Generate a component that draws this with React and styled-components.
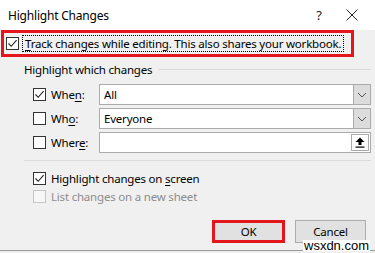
import React from 'react';
import styled, { createGlobalStyle } from 'styled-components';

const Global = createGlobalStyle`
  body {
    margin: 0;
    background: #f0f0f0;
    font-family: "Noto Sans", "Liberation Sans", sans-serif;
  }
`;

const Dialog = styled.div`
  position: relative;
  width: 375px;
  height: 253px;
  background: #f0f0f0;
  font-size: 11.5px;
  letter-spacing: -0.2px;
  color: #000;
  overflow: hidden;
  white-space: nowrap;
`;

const TitleBar = styled.div`
  height: 30px;
  background: #fff;
  display: flex;
  align-items: center;
  padding-left: 8px;
  font-size: 12px;
  letter-spacing: -0.2px;
`;

const Title = styled.div`
  flex: 1;
`;

const TitleButton = styled.div`
  width: ${(p) => p.w}px;
  display: flex;
  justify-content: center;
  align-items: center;
  font-size: 13px;
  color: #222;
`;

const TrackBox = styled.div`
  margin-left: 1px;
  width: 345px;
  height: 21px;
  border: 3px solid #e3151d;
  display: flex;
  align-items: center;
  padding-left: 2px;
`;

const Focus = styled.span`
  margin-left: 4px;
  padding: 0 2px;
  outline: 1px dotted #000;
  line-height: 15px;
`;

const Box = styled.span`
  width: 11px;
  height: 11px;
  border: 1px solid ${(p) => (p.disabled ? '#c6c6c6' : '#333')};
  background: ${(p) => (p.disabled ? '#f7f7f7' : '#fff')};
  display: inline-flex;
  align-items: center;
  justify-content: center;
  flex: none;
`;

const Check = ({ on, disabled }) => (
  <Box disabled={disabled}>
    {on && (
      <svg width="11" height="11" viewBox="0 0 11 11">
        <path d="M1.5 5.5 L4.2 8.3 L9.6 2.2" fill="none" stroke="#222" strokeWidth="1.1" />
      </svg>
    )}
  </Box>
);

const Group = styled.div`
  padding: 3px 4px 0 24px;
`;

const GroupHead = styled.div`
  display: flex;
  align-items: center;
  height: 18px;
  &::after {
    content: '';
    flex: 1;
    height: 1px;
    background: #dcdcdc;
    margin-left: 6px;
  }
`;

const Rows = styled.div`
  display: flex;
  flex-direction: column;
  gap: 3px;
  margin-top: 6px;
  padding-left: 9px;
`;

const Row = styled.div`
  display: flex;
  align-items: center;
  height: 21px;
`;

const Label = styled.span`
  width: 48px;
  margin-left: 5px;
`;

const Field = styled.div`
  flex: 1;
  height: 19px;
  border: 1px solid #ababab;
  background: #fff;
  display: flex;
  align-items: stretch;
`;

const FieldText = styled.span`
  flex: 1;
  padding-left: 4px;
  line-height: 19px;
`;

const DropButton = styled.span`
  width: 16px;
  background: #dcdcdc;
  border-left: 1px solid #ababab;
  display: flex;
  align-items: center;
  justify-content: center;
`;

const RefButton = styled.span`
  width: 16px;
  margin: 1px;
  background: #fff;
  border: 1px solid #ababab;
  display: flex;
  align-items: center;
  justify-content: center;
`;

const Separator = styled.div`
  height: 1px;
  background: #dcdcdc;
  margin-top: 7px;
`;

const Options = styled.div`
  display: flex;
  flex-direction: column;
  margin-top: 8px;
  padding-left: 9px;
`;

const OptRow = styled.div`
  display: flex;
  align-items: center;
  height: 18px;
`;

const OptLabel = styled.span`
  margin-left: 5px;
  color: ${(p) => (p.disabled ? '#8d8d8d' : '#000')};
`;

const Buttons = styled.div`
  display: flex;
  justify-content: flex-end;
  gap: 10px;
  padding-right: 9px;
  margin-top: 15px;
`;

const Button = styled.div`
  width: ${(p) => p.w}px;
  height: 23px;
  box-sizing: border-box;
  background: #e1e1e1;
  border: ${(p) => (p.marked ? '3px solid #e3151d' : '1px solid #adadad')};
  display: flex;
  align-items: center;
  justify-content: center;
`;

const BottomEdge = styled.div`
  margin-top: 7px;
  height: 1px;
  background: #9a9a9a;
`;

const Watermark = styled.span`
  position: absolute;
  left: 303px;
  top: 240px;
  font-family: "Liberation Sans", sans-serif;
  font-size: 13px;
  letter-spacing: 0;
  background: #fff;
  line-height: 11px;
  padding: 0 1px;
`;

const U = styled.u`
  text-underline-offset: 2px;
`;

const Chevron = () => (
  <svg width="10" height="6" viewBox="0 0 10 6">
    <path d="M1 1 L5 5 L9 1" fill="none" stroke="#555" strokeWidth="1" />
  </svg>
);

const Arrow = () => (
  <svg width="10" height="11" viewBox="0 0 10 11">
    <path d="M5 0.5 L9.5 5 H6.5 V8 H3.5 V5 H0.5 Z" fill="#000" />
    <rect x="0.5" y="9.5" width="9" height="1.2" fill="#000" />
  </svg>
);

export default function App() {
  return (
    <>
      <Global />
      <Dialog>
        <TitleBar>
          <Title>Highlight Changes</Title>
          <TitleButton w={20}>?</TitleButton>
          <TitleButton w={46}>
            <svg width="12" height="12" viewBox="0 0 12 12">
              <path d="M0.5 0.5 L11.5 11.5 M11.5 0.5 L0.5 11.5" stroke="#222" strokeWidth="1" />
            </svg>
          </TitleButton>
        </TitleBar>
        <TrackBox>
          <Check on />
          <Focus>
            <U>T</U>rack changes while editing. This also shares your workbook.
          </Focus>
        </TrackBox>
        <Group>
          <GroupHead>Highlight which changes</GroupHead>
          <Rows>
            <Row>
              <Check on />
              <Label>Whe<U>n</U>:</Label>
              <Field>
                <FieldText>All</FieldText>
                <DropButton><Chevron /></DropButton>
              </Field>
            </Row>
            <Row>
              <Check />
              <Label>Wh<U>o</U>:</Label>
              <Field>
                <FieldText>Everyone</FieldText>
                <DropButton><Chevron /></DropButton>
              </Field>
            </Row>
            <Row>
              <Check />
              <Label>Wher<U>e</U>:</Label>
              <Field>
                <FieldText />
                <RefButton><Arrow /></RefButton>
              </Field>
            </Row>
          </Rows>
          <Separator />
          <Options>
            <OptRow>
              <Check on />
              <OptLabel>Highlight changes on <U>s</U>creen</OptLabel>
            </OptRow>
            <OptRow>
              <Check disabled />
              <OptLabel disabled>List changes on a new sheet</OptLabel>
            </OptRow>
          </Options>
        </Group>
        <Buttons>
          <Button w={73} marked>OK</Button>
          <Button w={71}>Cancel</Button>
        </Buttons>
        <BottomEdge />
        <Watermark>wsxdn.com</Watermark>
      </Dialog>
    </>
  );
}
